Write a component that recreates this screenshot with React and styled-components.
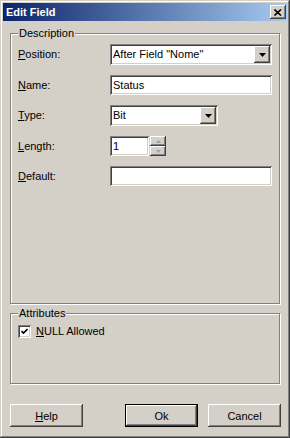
import styled, { createGlobalStyle } from "styled-components";

const GlobalStyle = createGlobalStyle`
  html, body { margin: 0; padding: 0; background: #d4d0c8; }
  body {
    font-family: "Liberation Sans", Arial, sans-serif;
    font-size: 11px;
    color: #000;
  }
`;

const raised = `
  box-shadow: inset -1px -1px #404040, inset 1px 1px #fff,
    inset -2px -2px #808080, inset 2px 2px #d4d0c8;
`;
const sunken = `
  box-shadow: inset 1px 1px #808080, inset -1px -1px #fff,
    inset 2px 2px #404040, inset -2px -2px #d4d0c8;
`;

const Window = styled.div`
  width: 290px;
  height: 438px;
  box-sizing: border-box;
  padding: 3px;
  background: #d4d0c8;
  box-shadow: inset -1px -1px #404040, inset 1px 1px #d4d0c8,
    inset -2px -2px #808080, inset 2px 2px #fff;
  display: flex;
  flex-direction: column;
`;

const TitleBar = styled.div`
  height: 18px;
  display: flex;
  align-items: center;
  justify-content: space-between;
  padding: 0 1px 0 3px;
  background: linear-gradient(to right, #0a246a, #a6caf0);
`;

const Title = styled.span`
  color: #fff;
  font-weight: bold;
  font-size: 11px;
`;

const CloseButton = styled.div`
  width: 16px;
  height: 14px;
  background: #d4d0c8;
  ${raised}
  display: flex;
  align-items: center;
  justify-content: center;
`;

const Body = styled.div`
  flex: 1;
  display: flex;
  flex-direction: column;
  padding: 12px 6px 0 7px;
`;

const Group = styled.div`
  position: relative;
  height: ${(p) => p.$h}px;
  box-sizing: border-box;
  margin-top: ${(p) => p.$mt || 0}px;
  border: 1px solid #808080;
  margin-right: 1px;
  box-shadow: inset 1px 1px #fff, 1px 1px #fff;
`;

const Legend = styled.span`
  position: absolute;
  top: -7px;
  left: 7px;
  padding: 0 1px;
  line-height: 13px;
  background: #d4d0c8;
`;

const FieldGrid = styled.div`
  display: grid;
  grid-template-columns: 92px auto;
  grid-template-rows: 21px 20px 21px 20px 20px;
  row-gap: 10px;
  align-items: center;
  padding: 10px 0 0 7px;
`;

const Label = styled.label`
  line-height: 13px;
`;

const Key = styled.span`
  text-decoration: underline;
`;

const Combo = styled.div`
  width: ${(p) => p.$w}px;
  height: 21px;
  box-sizing: border-box;
  padding: 2px;
  background: #fff;
  ${sunken}
  display: flex;
  align-items: stretch;
`;

const ComboText = styled.span`
  flex: 1;
  padding-left: 1px;
  line-height: 17px;
`;

const DropButton = styled.div`
  width: 16px;
  background: #d4d0c8;
  ${raised}
  display: flex;
  align-items: center;
  justify-content: center;
`;

const Edit = styled.div`
  width: ${(p) => p.$w}px;
  height: 20px;
  box-sizing: border-box;
  padding: 2px 3px;
  line-height: 16px;
  background: #fff;
  ${sunken}
`;

const SpinRow = styled.div`
  display: flex;
  gap: 1px;
`;

const Spinner = styled.div`
  display: flex;
  flex-direction: column;
  width: 16px;
  height: 20px;
`;

const SpinButton = styled.div`
  flex: 1;
  background: #d4d0c8;
  ${raised}
  display: flex;
  align-items: center;
  justify-content: center;
`;

const CheckRow = styled.div`
  display: flex;
  align-items: center;
  gap: 5px;
  padding: 11px 0 0 7px;
`;

const CheckBox = styled.div`
  width: 13px;
  height: 13px;
  background: #fff;
  ${sunken}
  display: flex;
  align-items: center;
  justify-content: center;
`;

const ButtonRow = styled.div`
  display: flex;
  gap: 10px;
  margin-top: 20px;
`;

const Spacer = styled.div`
  flex: 1;
`;

const PushButton = styled.div`
  width: 73px;
  height: 23px;
  display: flex;
  align-items: center;
  justify-content: center;
  background: #d4d0c8;
  ${(p) =>
    p.$default
      ? `box-shadow: inset 0 0 0 1px #000, inset -2px -2px #404040, inset 2px 2px #fff,
          inset -3px -3px #808080;`
      : raised}
`;

const DownArrow = () => (
  <svg width="7" height="4" viewBox="0 0 7 4">
    <path d="M0 0h7L3.5 4z" fill="#000" />
  </svg>
);

const SmallArrow = ({ up }) => (
  <svg width="5" height="3" viewBox="0 0 5 3">
    <path d={up ? "M2.5 0L5 3H0z" : "M0 0h5L2.5 3z"} fill="#a0a0a0" />
  </svg>
);

export default function App() {
  return (
    <>
      <GlobalStyle />
      <Window>
        <TitleBar>
          <Title>Edit Field</Title>
          <CloseButton>
            <svg width="8" height="7" viewBox="0 0 8 7">
              <path d="M0.5 0.5L7 6.5M7 0.5L0.5 6.5" stroke="#000" strokeWidth="1.6" />
            </svg>
          </CloseButton>
        </TitleBar>
        <Body>
          <Group $h={271}>
            <Legend>Description</Legend>
            <FieldGrid>
              <Label><Key>P</Key>osition:</Label>
              <Combo $w={162}>
                <ComboText>After Field "Nome"</ComboText>
                <DropButton><DownArrow /></DropButton>
              </Combo>
              <Label><Key>N</Key>ame:</Label>
              <Edit $w={162}>Status</Edit>
              <Label><Key>T</Key>ype:</Label>
              <Combo $w={108}>
                <ComboText>Bit</ComboText>
                <DropButton><DownArrow /></DropButton>
              </Combo>
              <Label><Key>L</Key>ength:</Label>
              <SpinRow>
                <Edit $w={39}>1</Edit>
                <Spinner>
                  <SpinButton><SmallArrow up /></SpinButton>
                  <SpinButton><SmallArrow /></SpinButton>
                </Spinner>
              </SpinRow>
              <Label><Key>D</Key>efault:</Label>
              <Edit $w={162} />
            </FieldGrid>
          </Group>
          <Group $h={71} $mt={9}>
            <Legend>Attributes</Legend>
            <CheckRow>
              <CheckBox>
                <svg width="7" height="7" viewBox="0 0 7 7">
                  <path d="M0.5 3L2.5 5L6.5 1" stroke="#000" strokeWidth="1.6" fill="none" />
                </svg>
              </CheckBox>
              <Label><Key>N</Key>ULL Allowed</Label>
            </CheckRow>
          </Group>
          <ButtonRow>
            <PushButton><span><Key>H</Key>elp</span></PushButton>
            <Spacer />
            <PushButton $default>Ok</PushButton>
            <PushButton>Cancel</PushButton>
          </ButtonRow>
        </Body>
      </Window>
    </>
  );
}
